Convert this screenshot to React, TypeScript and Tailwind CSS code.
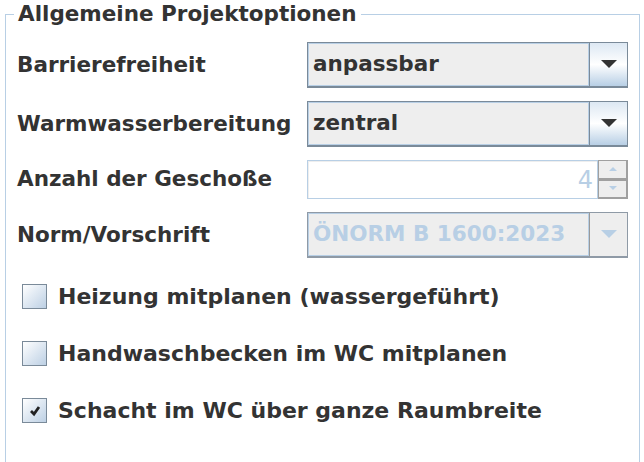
import { useState } from 'react';

const font = { fontFamily: '"DejaVu Sans", "Liberation Sans", sans-serif' };

function ArrowDown({ color }: { color: string }) {
  return (
    <svg width="16" height="9" viewBox="0 0 16 9">
      <polygon points="0,0 16,0 8,8" fill={color} />
    </svg>
  );
}

function Combo({ value, disabled = false }: { value: string; disabled?: boolean }) {
  return (
    <div
      className={`flex h-[46px] w-[321px] border border-b-2 ${
        disabled ? 'border-[#8f9aa6]' : 'border-[#7a8a99]'
      }`}
    >
      <div
        className={`flex flex-1 items-center bg-[#eeeeee] pl-[5px] shadow-[inset_1px_1px_0_#b8cfe5,inset_-1px_-1px_0_#b8cfe5] text-[21.5px] font-bold ${
          disabled ? 'text-[#b8cfe5]' : 'text-[#333333]'
        }`}
      >
        {value}
      </div>
      <div
        className={`flex w-[38px] items-center justify-center border-l ${
          disabled
            ? 'border-[#999999] bg-[#eeeeee]'
            : 'border-[#7a8a99] bg-gradient-to-b from-[#dde8f3] via-white to-[#b8cfe5]'
        }`}
      >
        <ArrowDown color={disabled ? '#b8cfe5' : '#333333'} />
      </div>
    </div>
  );
}

function Spinner({ value }: { value: number }) {
  return (
    <div className="flex h-[39px] w-[321px]">
      <div className="flex flex-1 items-center justify-end border border-[#b8cfe5] bg-white pr-[4px] shadow-[inset_1px_1px_0_#eeeeee] text-[24px] text-[#b8cfe5]">
        {value}
      </div>
      <div className="flex w-[30px] flex-col">
        {['up', 'down'].map((dir) => (
          <div
            key={dir}
            className="flex flex-1 items-center justify-center border border-r-2 border-b-2 border-[#a0a0a0] bg-[#eeeeee]"
          >
            <svg width="8" height="5" viewBox="0 0 8 5">
              {dir === 'up' ? (
                <polygon points="4,0 8,4 0,4" fill="#b8cfe5" />
              ) : (
                <polygon points="0,0 8,0 4,4" fill="#b8cfe5" />
              )}
            </svg>
          </div>
        ))}
      </div>
    </div>
  );
}

function Check({ label, initial }: { label: string; initial: boolean }) {
  const [checked, setChecked] = useState(initial);
  return (
    <label className="flex h-[24px] cursor-pointer items-center gap-[11px]" onClick={() => setChecked(!checked)}>
      <span className="flex h-[25px] w-[25px] items-center justify-center border border-[#7a8a99] bg-gradient-to-br from-white to-[#bdd0e4]">
        {checked && (
          <svg width="14" height="14" viewBox="0 0 14 14">
            <path d="M3 8 L6 11 L11 4" stroke="#222" strokeWidth="2.8" fill="none" />
          </svg>
        )}
      </span>
      <span className="text-[22px] font-bold text-[#333333]">{label}</span>
    </label>
  );
}

export default function App() {
  const rows = [
    { label: 'Barrierefreiheit', control: <Combo value="anpassbar" /> },
    { label: 'Warmwasserbereitung', control: <Combo value="zentral" /> },
    { label: 'Anzahl der Geschoße', control: <Spinner value={4} /> },
    { label: 'Norm/Vorschrift', control: <Combo value="ÖNORM B 1600:2023" disabled /> },
  ];

  return (
    <div className="h-[462px] w-[644px] overflow-hidden bg-white pl-[5px] pt-[3px]" style={font}>
      <fieldset className="h-[520px] w-[633px] border border-[#b8cfe5] px-[11px]">
        <legend className="-ml-[3px] px-[4px] text-[21.5px] font-bold leading-[22px] text-[#333333]">
          Allgemeine Projektoptionen
        </legend>
        <div className="mt-[17px] grid grid-cols-[290px_321px] gap-y-[13px]">
          {rows.map((r) => (
            <div key={r.label} className="contents">
              <div className="flex items-center text-[21.5px] font-bold text-[#333333]">{r.label}</div>
              {r.control}
            </div>
          ))}
        </div>
        <div className="mt-[26px] flex flex-col gap-[33px] pl-[5px]">
          <Check label="Heizung mitplanen (wassergeführt)" initial={false} />
          <Check label="Handwaschbecken im WC mitplanen" initial={false} />
          <Check label="Schacht im WC über ganze Raumbreite" initial={true} />
        </div>
      </fieldset>
    </div>
  );
}
